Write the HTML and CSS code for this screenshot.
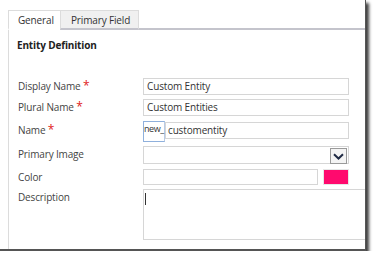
FILE: index.html
```html
<!DOCTYPE html>
<html lang="en">
<head>
    <meta charset="UTF-8">
    <title>Entity Definition</title>
    <link rel="stylesheet" href="styles.css">
</head>
<body>
    <div class="shot">
        <div class="tabs">
            <div class="tab active">General</div>
            <div class="tab">Primary Field</div>
            <div class="tab-rest"></div>
        </div>

        <div class="panel">
            <div class="section-title">Entity Definition</div>

            <div class="form">
                <div class="label">Display Name <span class="req">*</span></div>
                <div class="field"><div class="input">Custom Entity</div></div>

                <div class="label">Plural Name <span class="req">*</span></div>
                <div class="field"><div class="input">Custom Entities</div></div>

                <div class="label">Name <span class="req">*</span></div>
                <div class="field name-field">
                    <div class="prefix">new_</div>
                    <div class="input grow">customentity</div>
                </div>

                <div class="label">Primary Image</div>
                <div class="field">
                    <div class="input select">
                        <div class="drop">
                            <svg width="11" height="7" viewBox="0 0 11 7">
                                <path d="M1 1.2 L5.5 5.5 L10 1.2" fill="none" stroke="#1f2a44" stroke-width="2"/>
                            </svg>
                        </div>
                    </div>
                </div>

                <div class="label">Color</div>
                <div class="field color-field">
                    <div class="input color-input"></div>
                    <div class="swatch"></div>
                </div>

                <div class="label">Description</div>
                <div class="field"><div class="textarea"><span class="caret"></span></div></div>
            </div>
        </div>
    </div>
</body>
</html>
```

FILE: styles.css
```css
body {
    margin: 0;
    background: #fff;
    font-family: "Open Sans", "Noto Sans", sans-serif;
    font-size: 10px;
    letter-spacing: -0.15px;
    color: #444;
}

.shot {
    width: 366px;
    height: 251px;
    overflow: hidden;
    background: #fff;
    box-shadow: 3px 3px 3px rgba(0, 0, 0, 0.75);
    border-right: 1px solid #555;
    border-bottom: 2px solid #555;
    box-sizing: border-box;
}

.tabs {
    display: flex;
    padding: 10px 0 0 8px;
    height: 30px;
    box-sizing: border-box;
}

.tab {
    padding: 0 8px 0 10px;
    line-height: 18px;
    border: 1px solid #dcdcdc;
    color: #333;
    background: #f0f0f0;
    border-bottom: 2px solid #c4c4cc;
}

.tab.active {
    background: #fff;
    padding: 0 9px;
    width: 33px;
    border-bottom: 2px solid #fff;
    border-right: none;
}

.tab-rest {
    flex: 1;
    border-bottom: 2px solid #c4c4cc;
}

.panel {
    margin-left: 8px;
    border-left: 1px solid #dcdcdc;
    height: 230px;
    padding: 8px 0 0 8px;
    box-sizing: border-box;
}

.section-title {
    font-weight: bold;
    color: #222;
    line-height: 14px;
}

.form {
    display: grid;
    grid-template-columns: 125px 1fr;
    grid-template-rows: 21px 23px 24px 23px 20px 60px;
    margin-top: 26px;
    margin-left: 1px;
}

.label {
    line-height: 17px;
    color: #444;
}

.req {
    color: #e02020;
    font-size: 12px;
    line-height: 10px;
}

.field {
    display: flex;
    align-items: flex-start;
}

.input {
    width: 206px;
    height: 17px;
    box-sizing: border-box;
    border: 1px solid #d6d6d6;
    padding: 0 3px;
    line-height: 15px;
    color: #333;
}

.name-field .prefix {
    width: 22px;
    height: 21px;
    margin-top: -1px;
    box-sizing: border-box;
    border: 1px solid #8fb0dc;
    border-right-color: #b8cbe6;
    line-height: 14px;
    font-size: 9px;
    letter-spacing: -0.4px;
    white-space: nowrap;
    overflow: visible;
    color: #333;
}

.input.grow {
    width: 184px;
    padding-left: 2px;
}

.select {
    position: relative;
    height: 18px;
}

.drop {
    position: absolute;
    right: 1px;
    top: 1px;
    width: 15px;
    height: 14px;
    border: 1px solid #9a9a9a;
    background: #f4f4f4;
    display: flex;
    align-items: center;
    justify-content: center;
}

.color-field {
    gap: 5px;
}

.input.color-input {
    width: 175px;
    height: 16px;
}

.swatch {
    width: 26px;
    height: 16px;
    background: #ff0a6e;
    border: 1px solid #e6e6e6;
    box-sizing: border-box;
}

.textarea {
    width: 240px;
    height: 51px;
    box-sizing: border-box;
    border: 1px solid #d6d6d6;
    padding: 3px 1px;
}

.caret {
    display: block;
    width: 1px;
    height: 12px;
    background: #333;
}
```
